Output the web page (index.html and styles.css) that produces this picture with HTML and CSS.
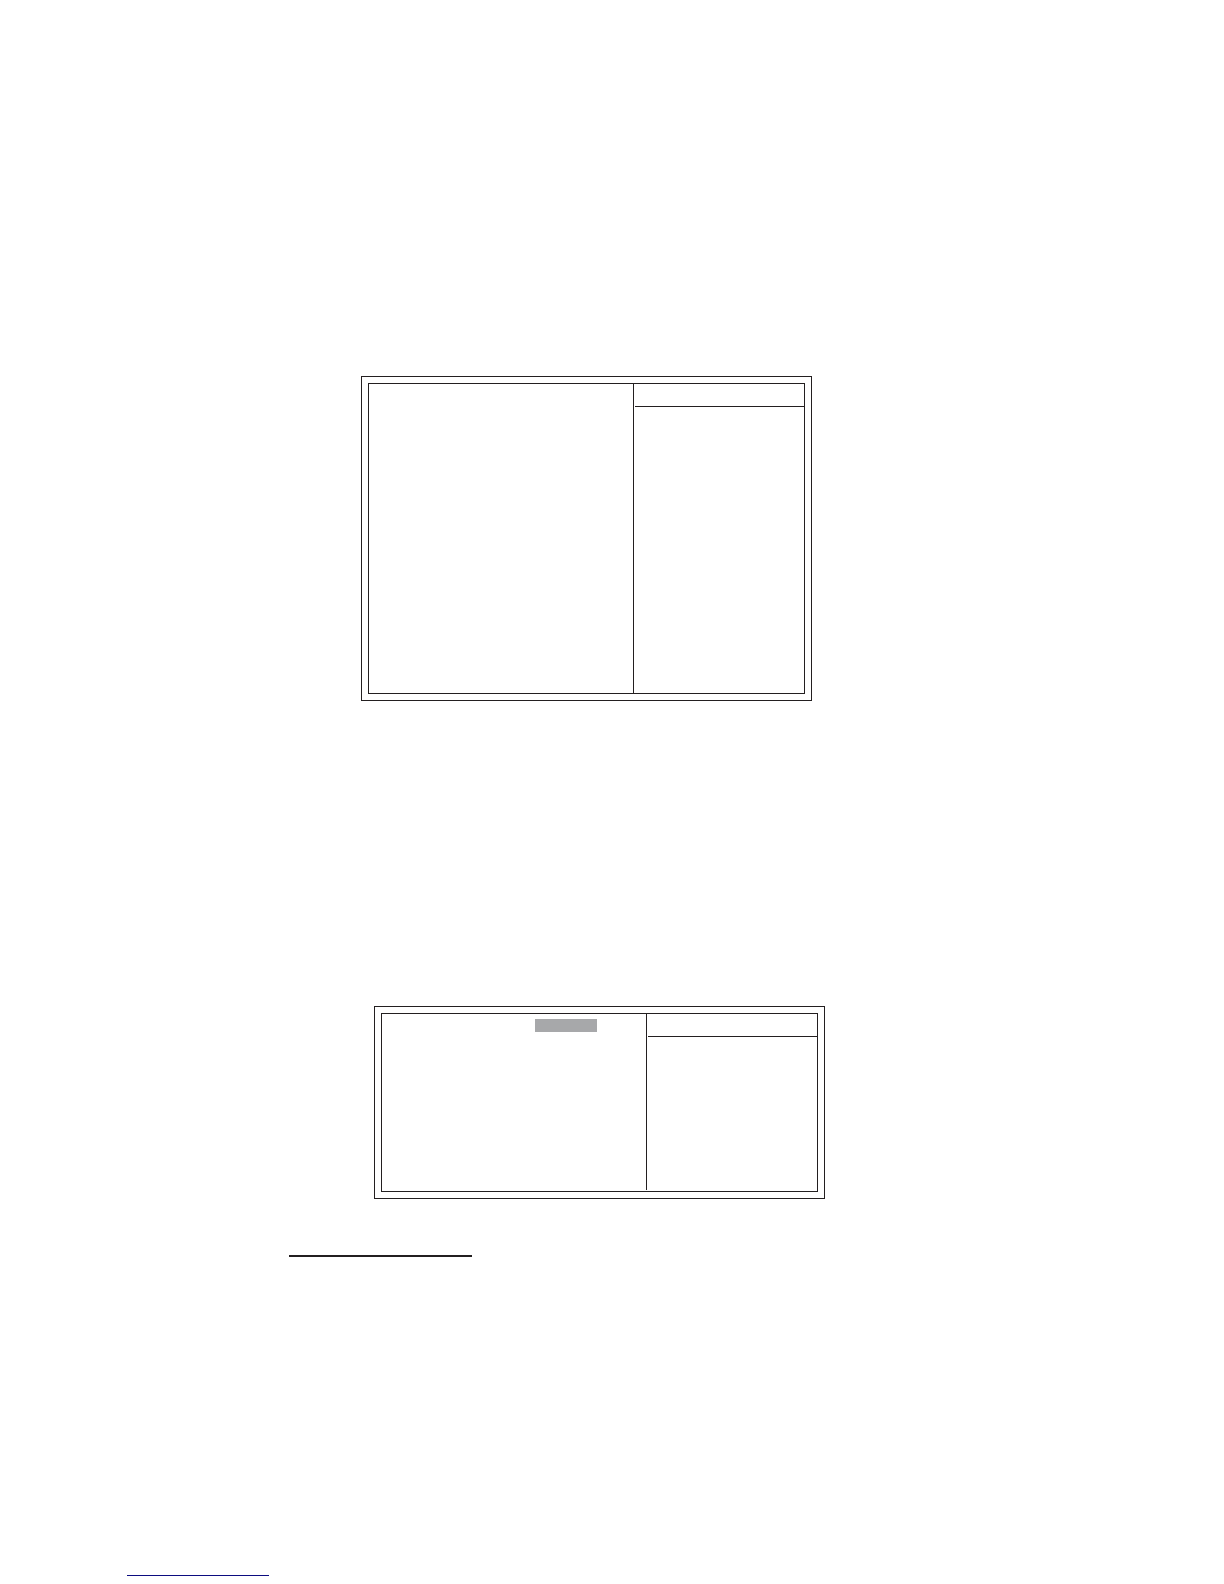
FILE: index.html
```
<!DOCTYPE html>
<html lang="en">
<head>
    <meta charset="UTF-8">
    <meta name="viewport" content="width=device-width, initial-scale=1.0">
    <title>Setup Screens</title>
    <link rel="stylesheet" href="styles.css">
</head>
<body>

<main class="page">
    <section class="screen screen-main">
        <div class="screen-inner">
            <div class="options"></div>
            <div class="help">
                <div class="help-header"></div>
            </div>
        </div>
    </section>

    <section class="screen screen-sub">
        <div class="screen-inner">
            <div class="options">
                <div class="highlight"></div>
            </div>
            <div class="help">
                <div class="help-header"></div>
            </div>
        </div>
    </section>

    <hr class="section-rule">
    <hr class="footer-rule">
</main>

</body>
</html>
```

FILE: styles.css
```
* {
    margin: 0;
    padding: 0;
    box-sizing: border-box;
}

body {
    font-family: "Liberation Sans", sans-serif;
    background-color: #ffffff;
}

.page {
    display: flex;
    flex-direction: column;
    min-height: 100vh;
    padding: 376px 0 8px;
}

/* double frame around each screen */
.screen {
    display: flex;
    border: 1px solid #231f20;
    padding: 6px;
}

.screen-main {
    min-height: 325px;
    margin: 0 412px 305px 361px;
}

.screen-sub {
    min-height: 193px;
    margin: 0 399px 56px 374px;
}

.screen-inner {
    flex: 1;
    display: grid;
    grid-template-columns: 53fr 34fr;
    border: 1px solid #231f20;
}

.screen-sub .screen-inner {
    padding-bottom: 1px;
}

.options {
    display: flex;
    justify-content: flex-end;
    align-items: flex-start;
    padding: 5px 49px;
    border-right: 1px solid #231f20;
}

.highlight {
    width: 62px;
    height: 13px;
    background-color: #a7a8aa;
}

.help {
    padding-left: 1px;
}

.help-header {
    height: 23px;
    border-bottom: 1px solid #231f20;
}

hr {
    border: none;
}

.section-rule {
    height: 2px;
    margin: 0 752px 0 289px;
    background-color: #231f20;
}

.footer-rule {
    height: 1px;
    margin: auto 955px 0 127px;
    background-color: #0c0c80;
}
```
